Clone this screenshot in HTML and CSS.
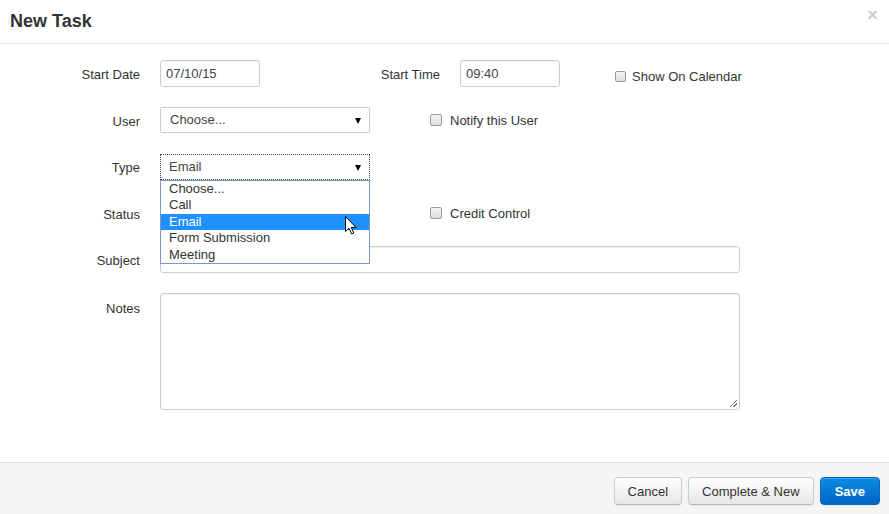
FILE: index.html
```html
<!DOCTYPE html>
<html>
<head>
<meta charset="utf-8">
<title>New Task</title>
<link rel="stylesheet" href="styles.css">
</head>
<body>
<div class="modal">
	<div class="modal-header">
		<h3>New Task</h3>
		<span class="close">&times;</span>
	</div>
	<div class="modal-body">
		<div class="row">
			<label class="lbl">Start Date</label>
			<div class="input small">07/10/15</div>
			<label class="lbl lbl-wide">Start Time</label>
			<div class="input small">09:40</div>
			<span class="check check-cal"><span class="box"></span>Show On Calendar</span>
		</div>
		<div class="row">
			<label class="lbl">User</label>
			<div class="select">Choose...<span class="arrow"></span></div>
			<span class="check"><span class="box"></span>Notify this User</span>
		</div>
		<div class="row">
			<label class="lbl">Type</label>
			<div class="select focused">Email<span class="arrow"></span>
				<ul class="dropdown">
					<li>Choose...</li>
					<li>Call</li>
					<li class="hover">Email
						<svg class="cursor" width="13" height="19" viewBox="0 0 13 19"><path d="M0.5 0.5 L0.5 15.5 L4 12.2 L6.6 18 L8.8 17 L6.3 11.4 L11 11.4 Z" fill="#fff" stroke="#000" stroke-width="1" stroke-linejoin="round"/></svg>
					</li>
					<li>Form Submission</li>
					<li>Meeting</li>
				</ul>
			</div>
		</div>
		<div class="row">
			<label class="lbl">Status</label>
			<div class="select">Open<span class="arrow"></span></div>
			<span class="check"><span class="box"></span>Credit Control</span>
		</div>
		<div class="row">
			<label class="lbl">Subject</label>
			<div class="input wide"></div>
		</div>
		<div class="row row-notes">
			<label class="lbl">Notes</label>
			<div class="textarea"><span class="grip"></span></div>
		</div>
	</div>
	<div class="modal-footer">
		<button class="btn">Cancel</button>
		<button class="btn">Complete &amp; New</button>
		<button class="btn btn-primary">Save</button>
	</div>
</div>
</body>
</html>
```
FILE: styles.css
```css
html, body{
	margin: 0;
	padding: 0;
	background: #fff;
}
body{
	font-family: "Liberation Sans", Arial, sans-serif;
	font-size: 13px;
	color: #333;
}
.modal{
	height: 514px;
	display: flex;
	flex-direction: column;
	overflow: hidden;
}
.modal-header{
	position: relative;
	padding: 8px 10px 9px;
	border-bottom: 1px solid #e5e5e5;
}
.modal-header h3{
	margin: 0;
	font-size: 18px;
	line-height: 26px;
	font-weight: bold;
	color: #333;
}
.close{
	position: absolute;
	right: 11px;
	top: 5px;
	font-size: 19px;
	font-weight: bold;
	line-height: 20px;
	color: #000;
	opacity: 0.2;
}
.modal-body{
	flex: 1;
	padding-top: 16px;
}
.row{
	display: flex;
	align-items: center;
	height: 27px;
	margin-bottom: 19.6px;
}
.lbl{
	width: 140px;
	margin-right: 20px;
	text-align: right;
	padding-top: 2px;
	box-sizing: border-box;
}
.lbl-wide{
	width: 180px;
}
.input, .select, .textarea{
	box-sizing: border-box;
	border: 1px solid #ccc;
	border-radius: 3px;
	background: #fff;
	color: #444;
	height: 27px;
	line-height: 25px;
	box-shadow: inset 0 1px 1px rgba(0,0,0,0.06);
}
.input{
	padding: 0 5px;
}
.input.small{
	width: 100px;
}
.input.wide{
	width: 580px;
}
.select{
	position: relative;
	width: 210px;
	height: 26px;
	line-height: 24px;
	padding-left: 9px;
	border-radius: 2px;
	box-shadow: none;
}
.select.focused{
	border: 1px dotted #444;
	border-radius: 0;
	padding-left: 8px;
}
.arrow{
	position: absolute;
	right: 8px;
	top: 10px;
	width: 0;
	height: 0;
	border-left: 3.5px solid transparent;
	border-right: 3.5px solid transparent;
	border-top: 6px solid #000;
}
.dropdown{
	position: absolute;
	z-index: 5;
	left: -1px;
	top: 25px;
	width: 210px;
	box-sizing: border-box;
	margin: 0;
	padding: 0;
	list-style: none;
	border: 1px solid #7a98c8;
	background: #fff;
	color: #333;
}
.dropdown li{
	position: relative;
	height: 16.5px;
	line-height: 16px;
	padding-left: 8px;
	font-size: 13px;
}
.dropdown li.hover{
	background: #1e90ff;
	color: #fff;
}
.cursor{
	position: absolute;
	left: 184px;
	top: 2px;
}
.check{
	display: flex;
	align-items: center;
	margin-left: 60px;
	color: #333;
}
.check-cal{
	margin-left: 55px;
	padding-top: 6px;
}
.box{
	display: inline-block;
	width: 10px;
	height: 10px;
	margin-right: 8px;
	border: 1px solid #9a9a9a;
	border-radius: 2px;
	background: linear-gradient(#f4f4f4, #dedede);
}
.check-cal .box{
	width: 9px;
	height: 9px;
	margin-right: 6px;
}
.row-notes{
	align-items: flex-start;
	height: 117px;
}
.row-notes .lbl{
	line-height: 27px;
}
.textarea{
	position: relative;
	width: 580px;
	height: 117px;
}
.grip{
	position: absolute;
	right: 2px;
	bottom: 2px;
	width: 7px;
	height: 7px;
	background: linear-gradient(135deg, transparent 45%, #777 45%, #777 55%, transparent 55%, transparent 70%, #777 70%, #777 80%, transparent 80%);
}
.modal-footer{
	height: 52px;
	box-sizing: border-box;
	padding: 14px 9px 0 0;
	border-top: 1px solid #ddd;
	background: #f5f5f5;
	display: flex;
	justify-content: flex-end;
	align-items: flex-start;
	gap: 6px;
}
.btn{
	height: 28px;
	padding: 0 13px;
	font-family: "Liberation Sans", Arial, sans-serif;
	font-size: 13px;
	color: #333;
	border: 1px solid #ccc;
	border-bottom-color: #b5b5b5;
	border-radius: 4px;
	background: linear-gradient(#fff, #e6e6e6);
	box-shadow: inset 0 1px 0 rgba(255,255,255,0.2), 0 1px 2px rgba(0,0,0,0.05);
}
.btn-primary{
	color: #fff;
	font-weight: bold;
	border-color: #0a66c2;
	background: linear-gradient(#0b8ce3, #0065c6);
	padding: 0 14px;
}
```
